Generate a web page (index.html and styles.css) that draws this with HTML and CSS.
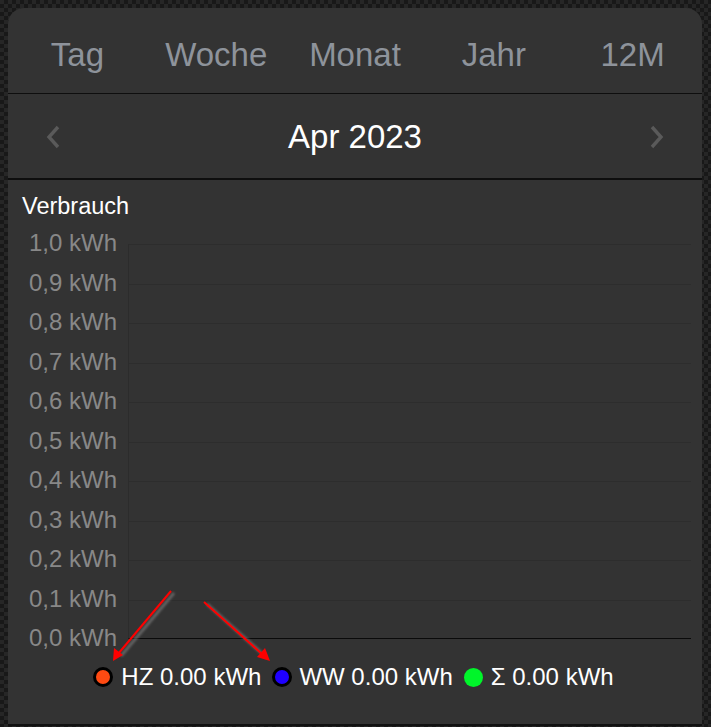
FILE: index.html
```html
<!DOCTYPE html>
<html lang="de">
<head>
  <meta charset="UTF-8" />
  <meta name="viewport" content="width=device-width, initial-scale=1.0"/>
  <title>Verbrauch - Monat</title>
  <link rel="stylesheet" href="styles.css">
</head>
<body>
  <main class="card">
    <nav class="tabs">
      <span>Tag</span>
      <span>Woche</span>
      <span class="active">Monat</span>
      <span>Jahr</span>
      <span>12M</span>
    </nav>

    <div class="period">
      <button class="nav-arrow" aria-label="zurück">
        <svg width="14" height="24" viewBox="0 0 14 24"><polyline points="12,2 3,12 12,22" /></svg>
      </button>
      <h2>Apr 2023</h2>
      <button class="nav-arrow" aria-label="weiter">
        <svg width="14" height="24" viewBox="0 0 14 24"><polyline points="2,2 11,12 2,22" /></svg>
      </button>
    </div>

    <section class="chart">
      <h3>Verbrauch</h3>
      <div class="chart-grid">
        <ul class="y-labels">
          <li>1,0 kWh</li>
          <li>0,9 kWh</li>
          <li>0,8 kWh</li>
          <li>0,7 kWh</li>
          <li>0,6 kWh</li>
          <li>0,5 kWh</li>
          <li>0,4 kWh</li>
          <li>0,3 kWh</li>
          <li>0,2 kWh</li>
          <li>0,1 kWh</li>
          <li>0,0 kWh</li>
        </ul>
        <div class="plot"></div>
      </div>

      <div class="legend">
        <span class="dot hz"></span><span class="legend-text">HZ 0.00 kWh</span>
        <span class="dot ww"></span><span class="legend-text">WW 0.00 kWh</span>
        <span class="dot sum"></span><span class="legend-text">Σ 0.00 kWh</span>
      </div>
    </section>

    <!-- annotation arrows -->
    <svg class="arrows" width="694" height="718" viewBox="8 8 694 718">
      <defs>
        <filter id="shade" x="-20%" y="-20%" width="140%" height="140%">
          <feGaussianBlur stdDeviation="1.2" />
        </filter>
      </defs>
      <g class="shadow" filter="url(#shade)" transform="translate(3,2)">
        <line x1="171" y1="591" x2="118" y2="654" />
        <line x1="204" y1="602" x2="263" y2="655" />
      </g>
      <g class="arrow">
        <line x1="171" y1="591" x2="118" y2="654" />
        <polygon points="113,661 114,648 123,655" />
        <line x1="204" y1="602" x2="263" y2="655" />
        <polygon points="270,661 257,657 265,648" />
      </g>
    </svg>
  </main>
</body>
</html>
```

FILE: styles.css
```css
* {
  box-sizing: border-box;
  font-family: "Liberation Sans", Arial, sans-serif;
}

body {
  margin: 0;
  padding: 8px 9px 0 8px;
  height: 727px;
  overflow: hidden;
  background-color: #262626;
  background-image:
    linear-gradient(45deg, #181818 25%, transparent 25%, transparent 75%, #181818 75%),
    linear-gradient(45deg, #181818 25%, transparent 25%, transparent 75%, #181818 75%);
  background-size: 8px 8px;
  background-position: 0 0, 4px 4px;
}

.card {
  position: relative;
  width: 694px;
  height: 718px;
  background-color: #333333;
  border-radius: 16px 16px 0 0;
  border-bottom: 2px solid #111;
  display: flex;
  flex-direction: column;
}

.tabs {
  height: 86px;
  padding-top: 9px;
  display: grid;
  grid-template-columns: repeat(5, 1fr);
  align-items: center;
  text-align: center;
  border-bottom: 1px solid #0e0e0e;
}

.tabs span {
  font-size: 33px;
  color: #8e939b;
}

.period {
  height: 86px;
  display: flex;
  align-items: center;
  justify-content: space-between;
  padding: 1px 38px 0 38px;
  border-bottom: 2px solid #0e0e0e;
}

.period h2 {
  margin: 0;
  font-size: 33px;
  font-weight: normal;
  color: white;
}

.nav-arrow {
  background: none;
  border: none;
  padding: 0;
  width: 14px;
  height: 24px;
  cursor: pointer;
}

.nav-arrow polyline {
  fill: none;
  stroke: #5a5a5a;
  stroke-width: 3.4;
}

.chart {
  padding: 13px 11px 0 14px;
}

.chart h3 {
  margin: 0 0 4px 0;
  font-size: 23.5px;
  font-weight: normal;
  color: white;
}

.chart-grid {
  display: grid;
  grid-template-columns: 95px 1fr;
  column-gap: 11px;
}

.y-labels {
  list-style: none;
  margin: 0;
  padding: 0;
}

.y-labels li {
  height: 39.56px;
  line-height: 37px;
  text-align: right;
  font-size: 24px;
  color: #888888;
}

.plot {
  margin: 19.78px 0;
  border-left: 1px solid #2c2c2c;
  border-bottom: 1px solid #0a0a0a;
  background-image: repeating-linear-gradient(to bottom, #2d2d2d 0, #2d2d2d 1px, transparent 1px, transparent 39.56px);
}

.legend {
  display: flex;
  align-items: center;
  justify-content: center;
  margin: 4px 0 0 -6px;
  font-size: 24px;
  color: white;
}

.dot {
  width: 20px;
  height: 20px;
  border-radius: 50%;
  border: 3px solid #000;
  margin-right: 8px;
}

.dot.hz {
  background-color: #ff4a12;
}

.dot.ww {
  background-color: #1f00ff;
  margin-left: 11px;
  margin-right: 7px;
}

.dot.sum {
  width: 19px;
  height: 19px;
  border: none;
  background-color: #00f52a;
  margin-left: 11px;
}

.arrows {
  position: absolute;
  top: 0;
  left: 0;
  pointer-events: none;
}

.arrows .shadow line {
  stroke: rgba(120, 120, 120, 0.7);
  stroke-width: 3;
}

.arrows .arrow line {
  stroke: #ff0000;
  stroke-width: 2;
}

.arrows .arrow polygon {
  fill: #ff0000;
}
```
